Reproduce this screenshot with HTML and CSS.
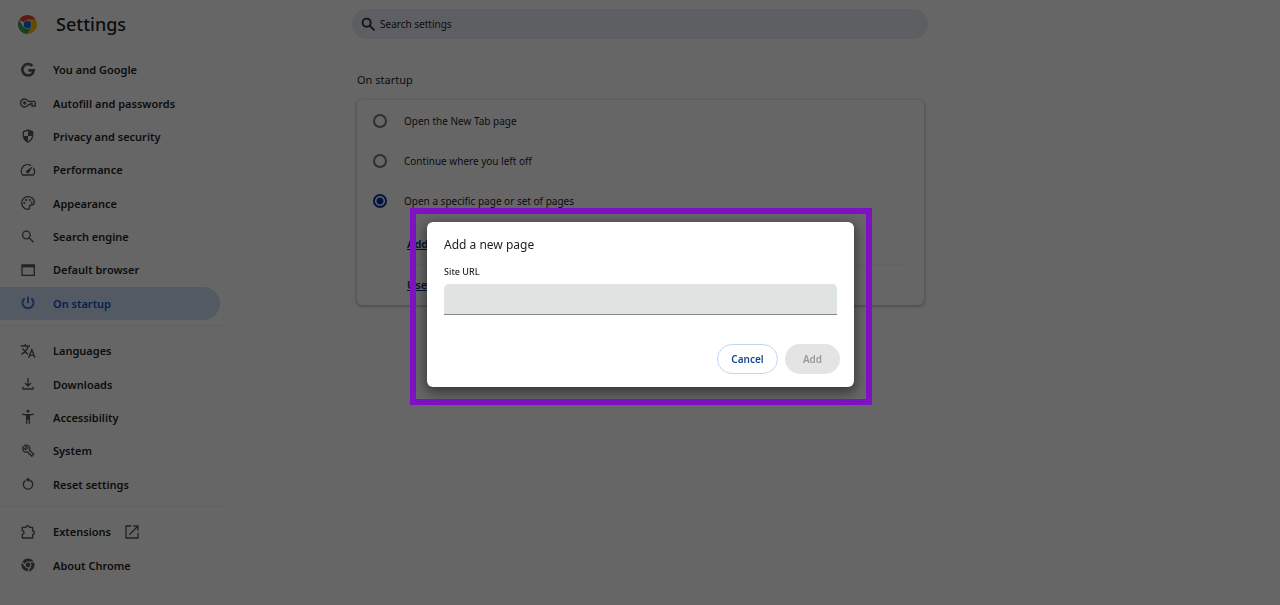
FILE: index.html
```html
<!DOCTYPE html>
<html lang="en">
<head>
<meta charset="utf-8">
<meta name="viewport" content="width=device-width, initial-scale=1">
<title>Settings - On startup</title>
<link rel="stylesheet" href="styles.css">
</head>
<body>
<div class="page">
  <header class="toolbar">
    <div class="brand">
      <svg class="logo" viewBox="0 0 48 48" aria-hidden="true">
        <path fill="#ea4335" d="M24 24 3.2 12A24 24 0 0 1 44.8 12H24z"/>
        <path fill="#fbbc04" d="M24 12h20.8A24 24 0 0 1 24 48l10.4-18z"/>
        <path fill="#34a853" d="M3.2 12A24 24 0 0 0 24 48l10.4-18L24 24 13.6 30z"/>
        <circle cx="24" cy="24" r="11" fill="#fff"/>
        <circle cx="24" cy="24" r="9.500" fill="#1a63d8"/>
      </svg>
      <h1 class="brand-title">Settings</h1>
    </div>
    <label class="search">
      <svg class="search-icon" viewBox="0 0 24 24" aria-hidden="true"><circle cx="9" cy="9" r="6.500"/><path d="m13.500 13.500 8 8"/></svg>
      <input class="search-input" type="search" placeholder="Search settings" aria-label="Search settings">
    </label>
  </header>

  <div class="body">
    <nav class="sidebar" aria-label="Settings sections">
      <ul class="menu menu-main">
        <li><a class="menu-link" href="#people"><svg class="icon" viewBox="0 0 24 24"><path class="line-bold" d="M18.600 6A8.600 8.600 0 1 0 20.600 12.500H12.500"/></svg>You and Google</a></li>
        <li><a class="menu-link" href="#autofill"><svg class="icon" viewBox="0 0 24 24"><path class="line" d="M12.300 9.500A6 6 0 1 0 12.300 14.500H15.500V12.500H18V16.500H22.800V11L21.500 9.500z"/><circle cx="7" cy="12" r="2.500"/></svg>Autofill and passwords</a></li>
        <li><a class="menu-link" href="#privacy"><svg class="icon" viewBox="0 0 24 24"><path d="M12 2 4 5v6c0 5.200 3.400 9.700 8 11 4.600-1.300 8-5.800 8-11V5zm0 10h6c-.5 3.600-3 6.800-6 7.900V12H6V6.400l6-2.300z"/></svg>Privacy and security</a></li>
        <li><a class="menu-link" href="#performance"><svg class="icon" viewBox="0 0 24 24"><path class="line" d="M16.500 5.400A9.600 9.600 0 0 0 3.900 19.500h16.200a9.600 9.600 0 0 0 .2-10.400"/><path d="m19.500 6-9 6.300a2.500 2.500 0 1 0 3.300 3.400z"/></svg>Performance</a></li>
        <li><a class="menu-link" href="#appearance"><svg class="icon" viewBox="0 0 24 24"><path class="line" d="M12 2.500a9.500 9.500 0 0 0 0 19c1.700 0 2.600-1.300 2.300-2.800-.5-2.200.3-3.700 2.700-3.700h1c2 0 3.500-1.500 3.500-4 0-5-4.200-8.500-9.500-8.500z"/><circle cx="6.500" cy="12" r="1.600"/><circle cx="9.300" cy="7.500" r="1.600"/><circle cx="14.700" cy="7.500" r="1.600"/><circle cx="17.500" cy="11.300" r="1.600"/></svg>Appearance</a></li>
        <li><a class="menu-link" href="#search"><svg class="icon" viewBox="0 0 24 24"><circle class="line" cx="9.500" cy="9" r="5.700"/><path class="line" d="m13.500 13 6.800 6.800"/></svg>Search engine</a></li>
        <li><a class="menu-link" href="#default"><svg class="icon" viewBox="0 0 24 24"><path class="line" d="M3 4.500h18.500v15.500H3z"/><path d="M3 4.500h18.500v3.500H3z"/></svg>Default browser</a></li>
        <li><a class="menu-link menu-link-active" href="#startup" aria-current="page"><svg class="icon" viewBox="0 0 24 24"><path class="line-medium" d="M12 2.500v10M7 5a8.300 8.300 0 1 0 10 0"/></svg>On startup</a></li>
      </ul>
      <ul class="menu menu-tools">
        <li><a class="menu-link" href="#languages"><svg class="icon" viewBox="0 0 24 24"><path class="line" d="M1 4.500h14M8 1.500v3M12.500 4.500C11 10 6.500 14.500 2 17M4 8c2 4 5 7 8 9M13 22l4.700-12 4.700 12M14.500 18.500h6.500"/></svg>Languages</a></li>
        <li><a class="menu-link" href="#downloads"><svg class="icon" viewBox="0 0 24 24"><path class="line" d="M12 3v12M7.500 10.500 12 15l4.500-4.500M4.500 16v3.500h15V16"/></svg>Downloads</a></li>
        <li><a class="menu-link" href="#accessibility"><svg class="icon" viewBox="0 0 24 24"><circle cx="12" cy="3.500" r="2.200"/><path d="M21 8.700c-2 .5-4 .7-6 .9V22h-2v-6h-2v6H9V9.600c-2-.2-4-.4-6-.9l.5-2c5.500 1.200 11.500 1.200 17 0z"/></svg>Accessibility</a></li>
        <li><a class="menu-link" href="#system"><svg class="icon" viewBox="0 0 24 24"><path class="line" d="m4.500 6 4 4L11 7.500l-4-4C12 2 15.500 5.500 14 10.500l6.500 6.500-2.800 3-6.700-6.700C6 15 3 11 4.500 6z"/></svg>System</a></li>
        <li><a class="menu-link" href="#reset"><svg class="icon" viewBox="0 0 24 24"><path class="line" d="M8 7a7 7 0 1 0 8 0M12 5.500c1.500 0 2.800.3 4 1.500"/><path d="m13 2-4.500 3.700L13 9.500z"/></svg>Reset settings</a></li>
      </ul>
      <ul class="menu menu-about">
        <li><a class="menu-link" href="#extensions"><svg class="icon" viewBox="0 0 24 24"><path class="line" d="M3.500 5h5.500c0-3.500 5-3.500 5 0H19v5.500c3.500 0 3.500 5 0 5V21H3.500v-5.500c3.500-.5 3.500-5 0-5.500z"/></svg><span class="menu-external">Extensions<svg class="icon" viewBox="0 0 24 24"><path class="line" d="M11 3H3v18h18v-8M14 3h7v7M21 3 8 16"/></svg></span></a></li>
        <li><a class="menu-link" href="#about"><svg class="icon" viewBox="0 0 24 24"><path fill-rule="evenodd" d="M12 2.200c3.500 0 6.500 1.800 8.300 4.600H12a5.200 5.200 0 0 0-5 3.700L3.800 6.600A9.800 9.800 0 0 1 12 2.200zM2.900 8.200l4.600 6.300a5.200 5.200 0 0 0 5.500 2.600l-2.200 4.600A9.800 9.800 0 0 1 2.900 8.200zM21 8.400a9.800 9.800 0 0 1-8.500 13.400l4.100-7.300a5.200 5.200 0 0 0-1.200-6.100z"/><circle cx="12" cy="12" r="3.600"/></svg>About Chrome</a></li>
      </ul>
    </nav>

    <main class="content">
      <h2 class="section-title">On startup</h2>
      <form class="card">
        <label class="option"><input class="radio" type="radio" name="startup">Open the New Tab page</label>
        <label class="option"><input class="radio" type="radio" name="startup">Continue where you left off</label>
        <label class="option"><input class="radio" type="radio" name="startup" checked>Open a specific page or set of pages</label>
        <div class="page-actions">
          <div class="page-action"><a class="page-link" href="#add">Add</a></div>
          <div class="page-action"><a class="page-link" href="#current">Use</a></div>
        </div>
      </form>
    </main>
  </div>
</div>

<div class="scrim">
  <div class="highlight">
    <section class="dialog" role="dialog" aria-modal="true" aria-labelledby="dialog-title">
      <h2 class="dialog-title" id="dialog-title">Add a new page</h2>
      <label class="field-label" for="site-url">Site URL</label>
      <input class="field" id="site-url" type="text">
      <div class="dialog-buttons">
        <button class="button button-cancel" type="button">Cancel</button>
        <button class="button button-add" type="button" disabled>Add</button>
      </div>
    </section>
  </div>
</div>
</body>
</html>
```
FILE: styles.css
```css
* {
  box-sizing: border-box;
}

body {
  margin: 0;
  background: #fff;
  color: #1f1f1f;
  font-family: "Noto Sans", "Open Sans", sans-serif;
  font-size: 10px;
}

h1,
h2,
ul {
  margin: 0;
  padding: 0;
  font-weight: 400;
}

.toolbar,
.body {
  display: grid;
  grid-template-columns: minmax(224px, 1fr) minmax(0, 576px) minmax(0, 1fr);
}

.toolbar {
  align-items: center;
  padding: 9px 0 8px;
}

.brand {
  display: flex;
  align-items: center;
  gap: 19px;
  padding-left: 18px;
}

.logo {
  width: 19px;
  height: 19px;
}

.brand-title {
  font-size: 18px;
  line-height: 28px;
  font-weight: 500;
}

.search {
  display: flex;
  align-items: center;
  gap: 4px;
  height: 30px;
  padding: 0 9px;
  border-radius: 15px;
  background: #e9edf4;
}

.search-icon {
  width: 15px;
  height: 15px;
  fill: none;
  stroke: #333;
  stroke-width: 3;
}

.search-input {
  flex: 1;
  min-width: 0;
  padding: 0;
  border: 0;
  background: none;
  font: inherit;
}

.search-input::placeholder {
  color: #1f1f1f;
}

.sidebar {
  width: 224px;
  padding-top: 6px;
}

.menu {
  display: grid;
  grid-auto-rows: 1fr;
  list-style: none;
}

.menu-main {
  min-height: 267px;
}

.menu-tools {
  min-height: 167px;
}

.menu-about {
  min-height: 67px;
}

.menu + .menu {
  margin-top: 5px;
  padding-top: 8px;
  border-top: 1px solid #f0f1f3;
  box-sizing: content-box;
}

.menu-link {
  display: flex;
  align-items: center;
  gap: 17px;
  height: 100%;
  margin-right: 4px;
  padding-left: 20px;
  border-radius: 0 17px 17px 0;
  color: #1f1f1f;
  font-size: 11px;
  font-weight: 600;
  text-decoration: none;
}

.menu-link-active {
  background: #d3e1f8;
  color: #0b50c0;
}

.menu-external {
  display: flex;
  align-items: center;
  gap: 13px;
}

.icon {
  width: 16px;
  height: 16px;
  fill: currentColor;
  opacity: 0.75;
}

.line,
.line-medium,
.line-bold {
  fill: none;
  stroke: currentColor;
  stroke-width: 2;
}

.line-medium {
  stroke-width: 3;
}

.line-bold {
  stroke-width: 4;
}

.content {
  padding: 24px 4px 0 5px;
}

.section-title {
  font-size: 11px;
  line-height: 18px;
}

.card {
  margin-top: 11px;
  padding: 1px 18px 0 16px;
  border-radius: 5px;
  box-shadow: 0 1px 3px 1px rgb(60 64 67 / 30%);
}

.option {
  display: flex;
  align-items: center;
  gap: 17px;
  height: 40px;
}

.radio {
  appearance: none;
  width: 14px;
  height: 14px;
  margin: 0;
  border: 2px solid #747775;
  border-radius: 50%;
}

.radio:checked {
  border-color: #0b30a0;
  background: radial-gradient(circle, #0b30a0 3px, transparent 4px);
}

.page-actions {
  padding: 3px 0 0 34px;
}

.page-action {
  line-height: 40px;
}

.page-link {
  color: #0b2a7a;
  font-size: 11px;
  font-weight: 600;
}

.page-action + .page-action {
  border-top: 1px solid #f4f4f4;
}

.scrim {
  position: fixed;
  inset: 0;
  display: grid;
  place-items: center;
  padding: 8px 0 0 2px;
  background: rgb(0 0 0 / 60%);
}

.highlight {
  width: min(462px, 100%);
  padding: 8px 12px 12px 11px;
  border: 6px solid #7d12c4;
}

.dialog {
  padding: 14px 14px 13px 17px;
  border-radius: 6px;
  background: #fff;
  box-shadow: 0 4px 12px 2px rgb(0 0 0 / 45%);
}

.dialog-title {
  font-size: 12px;
  line-height: 18px;
}

.field-label {
  display: block;
  margin-top: 10px;
  font-size: 9px;
  line-height: 16px;
  font-weight: 500;
}

.field {
  display: block;
  width: calc(100% - 3px);
  height: 31px;
  margin-top: 4px;
  padding: 0 8px;
  border: 0;
  border-bottom: 1px solid #858987;
  border-radius: 5px 5px 0 0;
  background: #dfe3e1;
  font: inherit;
}

.dialog-buttons {
  display: flex;
  justify-content: flex-end;
  gap: 7px;
  margin-top: 29px;
}

.button {
  height: 30px;
  padding: 0;
  border: 0;
  border-radius: 15px;
  font: inherit;
  font-weight: 600;
}

.button-cancel {
  width: 61px;
  border: 1px solid #c2d7ee;
  background: #fff;
  color: #1b478f;
}

.button-add {
  width: 55px;
  background: #e4e4e4;
  color: #999;
}
```
